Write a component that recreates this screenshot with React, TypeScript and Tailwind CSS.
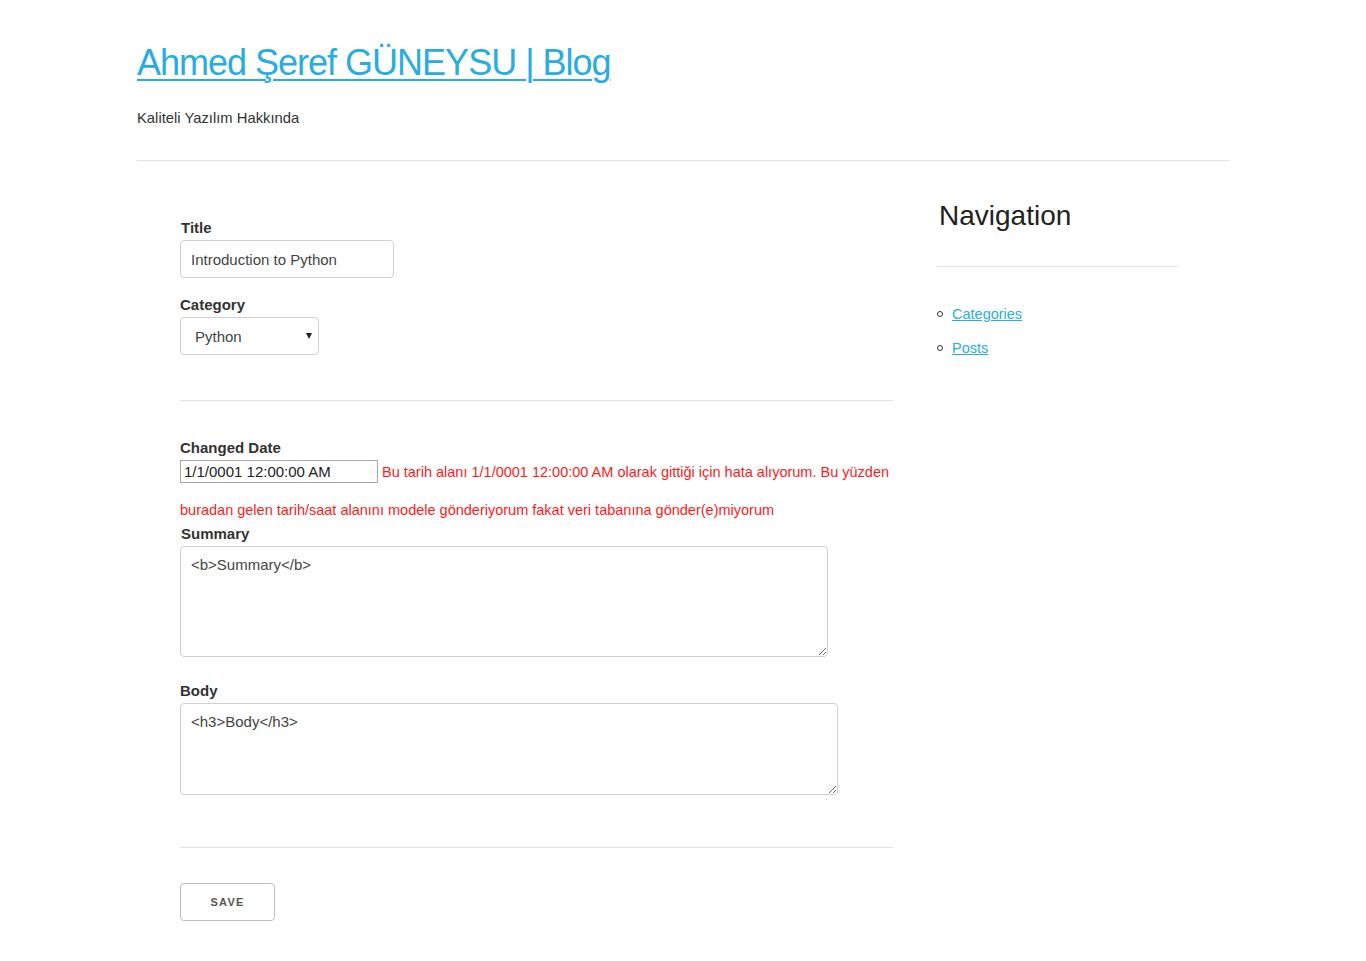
const font = { fontFamily: '"Liberation Sans", Arial, sans-serif' };

function Label({ text, className = "" }: { text: string; className?: string }) {
    return <div className={`text-[15px] leading-[20px] font-bold text-[#333] ${className}`}>{text}</div>;
}

export default function App() {
    return (
        <div className="min-h-[961px] bg-white text-[#333]" style={font}>
            <div className="mx-auto w-[1092px]">
                {/* header */}
                <header>
                    <h1 className="pt-[43px] text-[36px] leading-[40px] tracking-[-1px] font-normal">
                        <a href="#" className="text-[#29acdf] underline decoration-[2px] underline-offset-[4px]">
                            Ahmed Şeref GÜNEYSU | Blog
                        </a>
                    </h1>
                    <p className="mt-[25px] text-[14.8px] leading-[20px] text-[#333]">Kaliteli Yazılım Hakkında</p>
                    <div className="mt-[32px] h-px bg-[#e2e2e2]" />
                </header>

                <div className="flex">
                    {/* form */}
                    <div className="w-[756px] pl-[43px]">
                        <Label text="Title" className="mt-[57px] pl-px" />
                        <input
                            readOnly
                            value="Introduction to Python"
                            className="mt-[2px] block h-[38px] w-[214px] rounded-[4px] border border-[#d0d0d0] px-[10px] text-[15px] text-[#444] outline-none"
                        />

                        <Label text="Category" className="mt-[17px]" />
                        <div className="relative mt-[2px] h-[38px] w-[139px] rounded-[4px] border border-[#d0d0d0]">
                            <div className="pl-[14px] text-[15px] leading-[37px] text-[#444]">Python</div>
                            <span className="absolute right-[6px] top-[15px] h-0 w-0 border-x-[3px] border-t-[6px] border-x-transparent border-t-[#222]" />
                        </div>

                        <div className="mt-[45px] h-px w-[714px] bg-[#e2e2e2]" />

                        <Label text="Changed Date" className="mt-[37px]" />
                        <div className="mt-[2px] flex items-center">
                            <input
                                readOnly
                                value="1/1/0001 12:00:00 AM"
                                className="block h-[23px] w-[198px] border border-[#a6a6a6] px-[3px] text-[15px] text-[#222] outline-none"
                            />
                            <span className="ml-[4px] whitespace-nowrap text-[14.5px] leading-[20px] text-[#ff1a1a]">
                                Bu tarih alanı 1/1/0001 12:00:00 AM olarak gittiği için hata alıyorum. Bu yüzden
                            </span>
                        </div>
                        <div className="mt-[17px] whitespace-nowrap text-[14.5px] leading-[20px] text-[#ff1a1a]">
                            buradan gelen tarih/saat alanını modele gönderiyorum fakat veri tabanına gönder(e)miyorum
                        </div>

                        <Label text="Summary" className="mt-[4px] pl-px" />
                        <textarea
                            readOnly
                            value="<b>Summary</b>"
                            className="mt-[2px] block h-[111px] w-[648px] rounded-[4px] border border-[#d0d0d0] px-[10px] py-[8px] text-[15px] leading-[20px] text-[#444] outline-none"
                        />

                        <Label text="Body" className="mt-[24px]" />
                        <textarea
                            readOnly
                            value="<h3>Body</h3>"
                            className="mt-[2px] block h-[92px] w-[658px] rounded-[4px] border border-[#d0d0d0] px-[10px] py-[8px] text-[15px] leading-[20px] text-[#444] outline-none"
                        />

                        <div className="mt-[52px] h-px w-[714px] bg-[#e2e2e2]" />

                        <button className="mt-[35px] mb-[40px] h-[38px] w-[95px] rounded-[4px] border border-[#bdbdbd] bg-white pt-px text-[11px] font-bold tracking-[1.2px] text-[#555]">
                            SAVE
                        </button>
                    </div>

                    {/* sidebar */}
                    <aside className="ml-[44px] w-[241px]">
                        <h2 className="mt-[38px] pl-[2px] text-[28px] leading-[34px] font-normal text-[#222]">Navigation</h2>
                        <div className="mt-[33px] h-px bg-[#e2e2e2]" />
                        <ul className="mt-[37px]">
                            <li className="mb-[14px] flex items-center text-[14.5px] leading-[20px]">
                                <span className="h-[6px] w-[6px] rounded-full border border-[#333]" />
                                <a href="#" className="ml-[9px] text-[#29acdf] underline">Categories</a>
                            </li>
                            <li className="flex items-center text-[14.5px] leading-[20px]">
                                <span className="h-[6px] w-[6px] rounded-full border border-[#333]" />
                                <a href="#" className="ml-[9px] text-[#29acdf] underline">Posts</a>
                            </li>
                        </ul>
                    </aside>
                </div>
            </div>
        </div>
    );
}
